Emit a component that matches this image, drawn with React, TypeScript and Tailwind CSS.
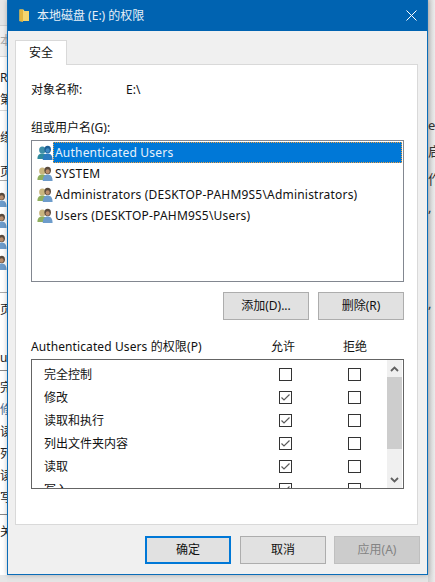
const groups = [
  'Authenticated Users',
  'SYSTEM',
  'Administrators (DESKTOP-PAHM9S5\\Administrators)',
  'Users (DESKTOP-PAHM9S5\\Users)',
]

const perms = [
  { name: '完全控制', allow: false },
  { name: '修改', allow: true },
  { name: '读取和执行', allow: true },
  { name: '列出文件夹内容', allow: true },
  { name: '读取', allow: true },
  { name: '写入', allow: true },
]

function UsersIcon({ selected = false }: { selected?: boolean }) {
  const backHead = selected ? '#3f8fa8' : '#c9b67e'
  const backBody = selected ? '#2f8a9e' : '#8fae5f'
  const frontHead = selected ? '#1d5f96' : '#5a4a3c'
  const frontBody = selected ? '#2c7cc0' : '#6d9ccb'
  return (
    <svg width="16" height="16" viewBox="0 0 18 16" preserveAspectRatio="none" className="shrink-0">
      <circle cx="6" cy="5" r="3.6" fill={backHead} />
      <path d="M0.5 14c0-4 2-5.500 5.500-5.500s5 1.500 5 5.500z" fill={backBody} />
      <circle cx="12" cy="4.500" r="3.700" fill={frontHead} />
      <circle cx="12" cy="5.500" r="2.300" fill={selected ? '#3f8ac4' : '#b98d6c'} />
      <path d="M6.500 15c0-4.500 2-6.500 5.500-6.500s5.500 2 5.500 6.500z" fill={frontBody} />
    </svg>
  )
}

function Checkbox({ checked }: { checked: boolean }) {
  return (
    <span className="flex h-[13px] w-[13px] items-center justify-center border border-[#333333] bg-white">
      {checked && (
        <svg width="11" height="11" viewBox="0 0 11 11">
          <path d="M1.500 5.500 L4 8 L9.500 2.500" fill="none" stroke="#5a5a5a" strokeWidth="1.200" />
        </svg>
      )}
    </span>
  )
}

function DialogButton({ label, className }: { label: string; className: string }) {
  return (
    <button className={`flex h-[28px] w-[86px] items-center justify-center text-[12px] ${className}`}>
      {label}
    </button>
  )
}

function LeftStrip() {
  return (
    <div className="flex h-full w-[7px] shrink-0 flex-col overflow-hidden bg-white text-[12px] leading-none text-[#222222]">
      <div className="h-[25px] shrink-0 bg-[#e6e6e6]" />
      <div className="flex h-[31px] shrink-0 items-center border-t border-[#d0d0d0] bg-[#f0f0f0] text-[#aaaaaa]">本</div>
      <div className="flex h-[28px] shrink-0 items-end border-t border-[#d8d8d8]">R</div>
      <div className="flex h-[26px] shrink-0 items-end pb-[4px]">第</div>
      <div className="flex h-[34px] shrink-0 items-end border-t border-[#d8d8d8]">缘</div>
      <div className="flex h-[36px] shrink-0 items-end pb-[2px]">页</div>
      <div className="flex h-[112px] shrink-0 flex-col gap-[5px] overflow-hidden border-t border-[#aaaaaa] pt-[11px]">
        <div className="-ml-[9px]"><UsersIcon /></div>
        <div className="-ml-[9px]"><UsersIcon /></div>
        <div className="-ml-[9px]"><UsersIcon /></div>
        <div className="-ml-[9px]"><UsersIcon /></div>
      </div>
      <div className="flex h-[24px] shrink-0 items-end border-t border-[#aaaaaa]">页</div>
      <div className="flex h-[54px] shrink-0 items-end pb-[6px]">ut</div>
      <div className="flex h-[144px] shrink-0 flex-col gap-[10px] border-t border-[#888888] pt-[11px]">
        <span>完</span>
        <span className="text-[#4a6a90]">修</span>
        <span>读</span>
        <span>列</span>
        <span>读</span>
        <span>写</span>
      </div>
      <div className="flex h-[24px] shrink-0 items-end border-t border-[#888888]">关</div>
      <div className="h-[37px] shrink-0" />
      <div className="flex-1 bg-[#e6e6e6]" />
    </div>
  )
}

function RightStrip() {
  return (
    <div className="flex h-full w-[7px] shrink-0 flex-col overflow-hidden bg-gradient-to-r from-[#cfcfcf] to-[#ececec] text-[13px] leading-none text-[#333333]">
      <div className="h-[119px] shrink-0" />
      <div className="h-[26px] shrink-0">e</div>
      <div className="h-[28px] shrink-0">启</div>
      <div className="h-[28px] shrink-0">作</div>
      <div className="h-[96px] shrink-0">,</div>
      <div>,</div>
    </div>
  )
}

export default function App() {
  return (
    <div className="flex h-[582px] w-[435px] overflow-hidden bg-[#e4e4e4] font-['Noto_Sans','Noto_Sans_CJK_SC',sans-serif] text-[12px] text-[#111111]">
      <LeftStrip />
      <div className="relative z-10 flex h-[575px] w-[421px] shrink-0 flex-col border-x border-b border-[#0a6cb8] bg-[#f0f0f0] shadow-[0_0_5px_rgba(0,0,0,0.25)]">
        <div className="flex h-[31px] shrink-0 items-center bg-[#0063b1] pr-[10px] pl-[11px] text-white">
          <svg width="11" height="13" viewBox="0 0 11 13" className="shrink-0">
            <path d="M0.500 0.500h4l1 1.500h4.500v10h-9.500z" fill="#f5d56f" />
            <path d="M0.500 0.500h3.500v12.500l-3.500-0.800z" fill="#e4b63f" />
          </svg>
          <span className="ml-[7px] text-[#e6eff7]">本地磁盘 (E:) 的权限</span>
          <svg width="11" height="11" viewBox="0 0 11 11" className="ml-auto">
            <path d="M0.500 0.500 L10.500 10.500 M10.500 0.500 L0.500 10.500" stroke="#ffffff" strokeWidth="1" />
          </svg>
        </div>

        <div className="flex flex-1 flex-col pt-[9px] pr-[7px] pl-[7px]">
          <div className="z-10 -mb-px flex h-[25px] w-[52px] items-center justify-center border border-b-0 border-[#d9d9d9] bg-white">
            安全
          </div>
          <div className="flex h-[461px] w-[403px] flex-col border border-[#d9d9d9] bg-white pl-[15px]">
            <div className="mt-[15px] flex h-[20px] items-center">
              <span className="w-[95px]">对象名称:</span>
              <span>E:\</span>
            </div>
            <div className="mt-[18px] flex h-[20px] items-center">组或用户名(G):</div>

            <div className="mt-[2px] flex h-[142px] w-[373px] flex-col border border-[#828790] p-px tracking-[0.2px]">
              {groups.map((g, i) => (
                <div key={g} className="flex h-[21px] items-center pl-[4px]">
                  <UsersIcon selected={i === 0} />
                  <span
                    className={
                      i === 0
                        ? 'flex h-[21px] flex-1 items-center border border-dotted border-[#f0a040] bg-[#0078d7] pl-[1px] text-[#e8f2fb]'
                        : 'pl-[2px]'
                    }
                  >
                    {g}
                  </span>
                </div>
              ))}
            </div>

            <div className="mt-[10px] flex w-[373px] justify-end gap-[9px]">
              <DialogButton label="添加(D)..." className="border border-[#adadad] bg-[#e1e1e1]" />
              <DialogButton label="删除(R)" className="border border-[#adadad] bg-[#e1e1e1]" />
            </div>

            <div className="mt-[17px] flex h-[20px] w-[373px] items-center">
              <span className="w-[217px] shrink-0 tracking-[0.1px]">Authenticated Users 的权限(P)</span>
              <span className="w-[70px] shrink-0 text-center">允许</span>
              <span className="w-[74px] shrink-0 text-center">拒绝</span>
            </div>

            <div className="mt-[2px] flex h-[130px] w-[373px] overflow-hidden border border-[#646464]">
              <div className="flex-1 overflow-hidden pt-[3px]">
                {perms.map(p => (
                  <div key={p.name} className="flex h-[23px] items-center pl-[12px]">
                    <span className="w-[206px] shrink-0">{p.name}</span>
                    <span className="flex w-[70px] shrink-0 justify-center">
                      <Checkbox checked={p.allow} />
                    </span>
                    <span className="flex w-[68px] shrink-0 justify-center">
                      <Checkbox checked={false} />
                    </span>
                  </div>
                ))}
              </div>
              <div className="mr-px flex w-[15px] shrink-0 flex-col bg-[#f0f0f0]">
                <div className="flex h-[17px] items-center justify-center">
                  <svg width="9" height="6" viewBox="0 0 9 6">
                    <path d="M1 5 L4.500 1.500 L8 5" fill="none" stroke="#606060" strokeWidth="1.800" />
                  </svg>
                </div>
                <div className="h-[72px] bg-[#cdcdcd]" />
                <div className="mt-auto flex h-[17px] items-center justify-center">
                  <svg width="9" height="6" viewBox="0 0 9 6">
                    <path d="M1 1 L4.500 4.500 L8 1" fill="none" stroke="#606060" strokeWidth="1.800" />
                  </svg>
                </div>
              </div>
            </div>
          </div>

          <div className="mt-[11px] flex justify-end gap-[8px]">
            <DialogButton label="确定" className="mr-px border-2 border-[#0078d7] bg-[#e1e1e1]" />
            <DialogButton label="取消" className="border border-[#adadad] bg-[#e1e1e1]" />
            <DialogButton label="应用(A)" className="border border-[#bfbfbf] bg-[#cccccc] text-[#838383]" />
          </div>
        </div>
      </div>
      <RightStrip />
    </div>
  )
}
